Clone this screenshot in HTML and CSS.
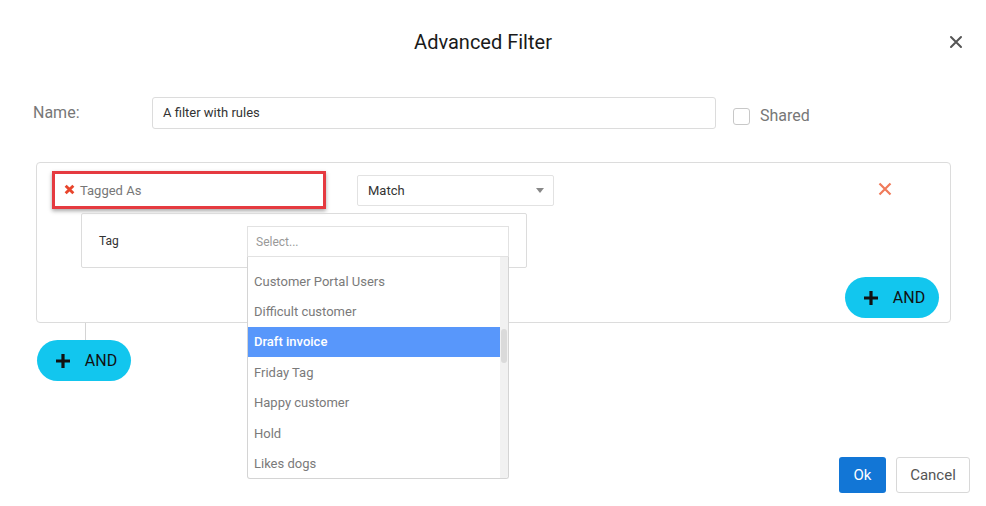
FILE: index.html
```html
<!DOCTYPE html>
<html>
<head>
<meta charset="utf-8">
<link rel="stylesheet" href="styles.css">
</head>
<body>
<div class="modal">
  <div class="header">
    <h1 class="title">Advanced Filter</h1>
    <button class="close" aria-label="Close">
      <svg width="14" height="14" viewBox="0 0 14 14"><path d="M2 2L12 12M12 2L2 12" stroke="#555" stroke-width="2" stroke-linecap="round"/></svg>
    </button>
  </div>

  <div class="name-row">
    <label class="name-label">Name:</label>
    <div class="name-input">A filter with rules</div>
    <span class="checkbox"></span>
    <span class="shared">Shared</span>
  </div>

  <div class="rules">
    <div class="rule-row">
      <div class="field">
        <svg class="field-x" width="11" height="11" viewBox="0 0 10 10"><path d="M1.5 1.5L8.5 8.5M8.5 1.5L1.5 8.5" stroke="#e8452c" stroke-width="2.6"/></svg>
        <span>Tagged As</span>
      </div>
      <div class="match">
        <span>Match</span>
        <span class="caret"></span>
      </div>
      <svg class="remove" width="14" height="14" viewBox="0 0 14 14"><path d="M1.5 1.5L12.5 12.5M12.5 1.5L1.5 12.5" stroke="#f07a5a" stroke-width="2.2"/></svg>
    </div>
    <div class="sub">
      <span class="tag-label">Tag</span>
      <div class="tag-select">
        <div class="tag-input">Select...</div>
        <div class="dropdown">
          <ul class="options">
            <li>Customer Portal Users</li>
            <li>Difficult customer</li>
            <li class="active">Draft invoice</li>
            <li>Friday Tag</li>
            <li>Happy customer</li>
            <li>Hold</li>
            <li>Likes dogs</li>
          </ul>
          <div class="scrollbar"><div class="thumb"></div></div>
        </div>
      </div>
    </div>
    <button class="and and-inner">
      <svg width="16" height="16" viewBox="0 0 16 16"><path d="M8 1V15M1 8H15" stroke="#111" stroke-width="3.2"/></svg>
      <span>AND</span>
    </button>
  </div>

  <div class="connector"></div>
  <button class="and and-outer">
    <svg width="16" height="16" viewBox="0 0 16 16"><path d="M8 1V15M1 8H15" stroke="#111" stroke-width="3.2"/></svg>
    <span>AND</span>
  </button>

  <div class="footer">
    <button class="ok">Ok</button>
    <button class="cancel">Cancel</button>
  </div>
</div>
</body>
</html>
```

FILE: styles.css
```css
* { box-sizing: border-box; }
html, body { margin: 0; padding: 0; background: #fff; }
body { font-family: Roboto, "Liberation Sans", sans-serif; color: #333; }

.modal {
  width: 986px;
  height: 506px;
  display: flex;
  flex-direction: column;
  position: relative;
  overflow: hidden;
}

.header {
  height: 84px;
  display: flex;
  align-items: center;
  justify-content: center;
  position: relative;
  padding-right: 20px;
}
.title {
  margin: 0;
  font-size: 20px;
  font-weight: 400;
  color: #1a1a1a;
}
.close {
  position: absolute;
  right: 23px;
  top: 35px;
  background: none;
  border: 0;
  padding: 0;
  width: 14px;
  height: 14px;
  display: flex;
}

.name-row {
  display: flex;
  align-items: center;
  margin-top: 13px;
  padding-left: 33px;
  height: 31px;
}
.name-label {
  width: 119px;
  font-size: 16px;
  color: #777;
}
.name-input {
  width: 564px;
  height: 32px;
  border: 1px solid #dcdcdc;
  border-radius: 3px;
  padding-left: 10px;
  display: flex;
  align-items: center;
  font-size: 13px;
  color: #333;
}
.checkbox {
  width: 17px;
  height: 17px;
  border: 1px solid #c8c8c8;
  border-radius: 3px;
  margin-left: 17px;
  margin-top: 7px;
}
.shared {
  margin-left: 10px;
  font-size: 16px;
  color: #777;
  margin-top: 6px;
}

.rules {
  margin-top: 34px;
  margin-left: 36px;
  width: 915px;
  height: 161px;
  border: 1px solid #dcdcdc;
  border-radius: 4px;
  display: flex;
  flex-direction: column;
  position: relative;
}
.rule-row {
  display: flex;
  align-items: center;
  padding-top: 8px;
  padding-left: 15px;
}
.field {
  width: 274px;
  height: 38px;
  border: 3px solid #e53a40;
  box-shadow: 0 2px 4px rgba(0,0,0,0.35);
  display: flex;
  align-items: center;
  padding-left: 9px;
  font-size: 13px;
  color: #777;
}
.field-x { margin-right: 5px; margin-top: -2px; }
.match {
  margin-left: 31px;
  width: 197px;
  height: 31px;
  border: 1px solid #e2e2e2;
  border-radius: 2px;
  display: flex;
  align-items: center;
  justify-content: space-between;
  padding: 0 9px 0 10px;
  font-size: 13px;
  color: #333;
}
.caret {
  width: 0;
  height: 0;
  border-left: 4px solid transparent;
  border-right: 4px solid transparent;
  border-top: 5px solid #888;
}
.remove { margin-left: 324px; margin-top: -3px; }

.sub {
  margin-top: 4px;
  margin-left: 44px;
  width: 446px;
  height: 55px;
  border: 1px solid #dcdcdc;
  border-radius: 2px;
  display: flex;
  align-items: flex-start;
  padding-top: 12px;
  padding-left: 17px;
}
.tag-label {
  width: 148px;
  font-size: 12px;
  color: #333;
  margin-top: 8px;
}
.tag-select {
  position: relative;
  width: 262px;
}
.tag-input {
  height: 31px;
  border: 1px solid #e2e2e2;
  padding-left: 8px;
  display: flex;
  align-items: center;
  font-size: 12px;
  color: #999;
}
.dropdown {
  position: absolute;
  left: 0;
  top: 31px;
  width: 262px;
  height: 222px;
  border: 1px solid #d4d4d4;
  border-top: 0;
  border-radius: 0 0 3px 3px;
  background: #fff;
  z-index: 5;
  display: flex;
  overflow: hidden;
}
.options {
  list-style: none;
  margin: 0;
  padding: 9px 0 0 0;
  flex: 1;
}
.options li {
  height: 30.4px;
  padding-left: 6px;
  display: flex;
  align-items: center;
  font-size: 13px;
  color: #7a7a7a;
}
.options li:first-child { padding-top: 1px; }
.options li.active {
  background: #5897fb;
  color: #fff;
  font-weight: 500;
}
.scrollbar {
  width: 8px;
  background: #f1f1f1;
  position: relative;
}
.thumb {
  position: absolute;
  left: 1px;
  width: 6px;
  top: 72px;
  height: 34px;
  background: #dadada;
  border-radius: 3px;
}

.and {
  border: 0;
  background: #12c6ee;
  border-radius: 21px;
  height: 41px;
  width: 94px;
  display: flex;
  align-items: center;
  justify-content: center;
  gap: 14px;
  font-family: Roboto, "Liberation Sans", sans-serif;
  font-size: 16px;
  color: #111;
  padding: 0 0 0 4px;
}
.and-inner {
  position: absolute;
  right: 11px;
  bottom: 4px;
}
.connector {
  margin-left: 85px;
  width: 1px;
  height: 17px;
  background: #d4d4d4;
}
.and-outer {
  margin-left: 37px;
}

.footer {
  margin-top: auto;
  display: flex;
  justify-content: flex-end;
  gap: 10px;
  padding: 0 16px 13px 0;
}
.ok, .cancel {
  height: 36px;
  border-radius: 3px;
  font-family: Roboto, "Liberation Sans", sans-serif;
  font-size: 15px;
}
.ok {
  width: 47px;
  background: #1276d6;
  color: #fff;
  border: 0;
}
.cancel {
  width: 74px;
  background: #fff;
  border: 1px solid #d8d8d8;
  color: #555;
}
```
